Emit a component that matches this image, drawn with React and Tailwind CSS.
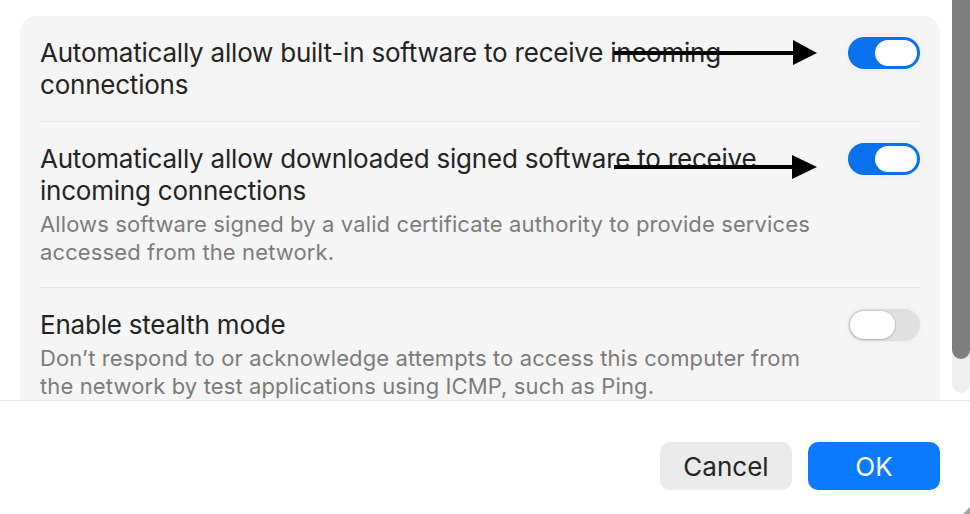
const Toggle = ({ on }) => {
  if (on) {
    return (
      <div className="w-[72px] h-[32px] shrink-0 rounded-full bg-[#0a71ee] p-[3px] flex justify-end shadow-[0_0_6px_rgba(0,0,0,0.06)]">
        <div className="w-[42px] h-[26px] rounded-full bg-white" />
      </div>
    );
  }
  return (
    <div className="w-[72px] h-[32px] shrink-0 rounded-full bg-[#e0e0e0] p-[2px] flex justify-start shadow-[0_0_6px_rgba(0,0,0,0.05)]">
      <div className="w-[45px] h-[28px] rounded-full bg-white shadow-[0_0_0_1px_rgba(0,0,0,0.08),0_1px_2px_rgba(0,0,0,0.15)]" />
    </div>
  );
};

const Row = ({ title, desc, on, className }) => (
  <div className={"flex items-start justify-between gap-4 pt-[21px] " + className}>
    <div className="flex-1 min-w-0">
      <div className="text-[26px] leading-[32px] tracking-[-0.22px] text-[#242424]">{title}</div>
      {desc && (
        <div className="mt-[3px] text-[22px] leading-[28px] tracking-[0.12px] text-[#7c7c7c]">{desc}</div>
      )}
    </div>
    <Toggle on={on} />
  </div>
);

export default function App() {
  return (
    <div className="relative w-[970px] h-[514px] overflow-hidden bg-white font-['Inter','Liberation_Sans',sans-serif]">
      {/* Scrolling settings area */}
      <div className="flex h-[400px] overflow-hidden">
        <div className="w-[952px] pt-4 pl-5 pr-3">
          <div className="w-[920px] rounded-2xl bg-[#f5f5f5] px-5">
            <Row
              className="pb-[20px]"
              on
              title={<>Automatically allow built-in software to receive incoming<br />connections</>}
            />
            <div className="h-px bg-[#e6e6e6]" />
            <Row
              className="pb-[21px]"
              on
              title={<>Automatically allow downloaded signed software to receive<br />incoming connections</>}
              desc={<>Allows software signed by a valid certificate authority to provide services<br />accessed from the network.</>}
            />
            <div className="h-px bg-[#e6e6e6]" />
            <Row
              className="pb-6"
              on={false}
              title="Enable stealth mode"
              desc={<>Don’t respond to or acknowledge attempts to access this computer from<br />the network by test applications using ICMP, such as Ping.</>}
            />
          </div>
        </div>
        {/* Scrollbar */}
        <div className="w-[18px] h-[393px] bg-[#efefef] rounded-b-full">
          <div className="h-[359px] bg-[#7e7e7e] rounded-b-full" />
        </div>
      </div>

      {/* Footer */}
      <div className="border-t border-[#e6e6e6] flex justify-end gap-4 pt-[41px] pr-[30px]">
        <button className="w-[132px] h-[48px] rounded-[10px] bg-[#ebebeb] text-[26px] text-[#242424]">
          Cancel
        </button>
        <button className="w-[132px] h-[48px] rounded-[10px] bg-[#0a7bff] text-[26px] text-white">
          OK
        </button>
      </div>

      {/* Annotation arrows and resize grip */}
      <svg className="absolute left-0 top-0 pointer-events-none" width="970" height="514">
        <rect x="614" y="51" width="182" height="4" fill="#000" />
        <polygon points="793,40 817,53 793,65" fill="#000" />
        <rect x="614" y="165" width="182" height="4" fill="#000" />
        <polygon points="792,155 817,167 792,179" fill="#000" />
        <polygon points="970,507 970,514 963,514" fill="#a0a0a0" />
      </svg>
    </div>
  );
}
